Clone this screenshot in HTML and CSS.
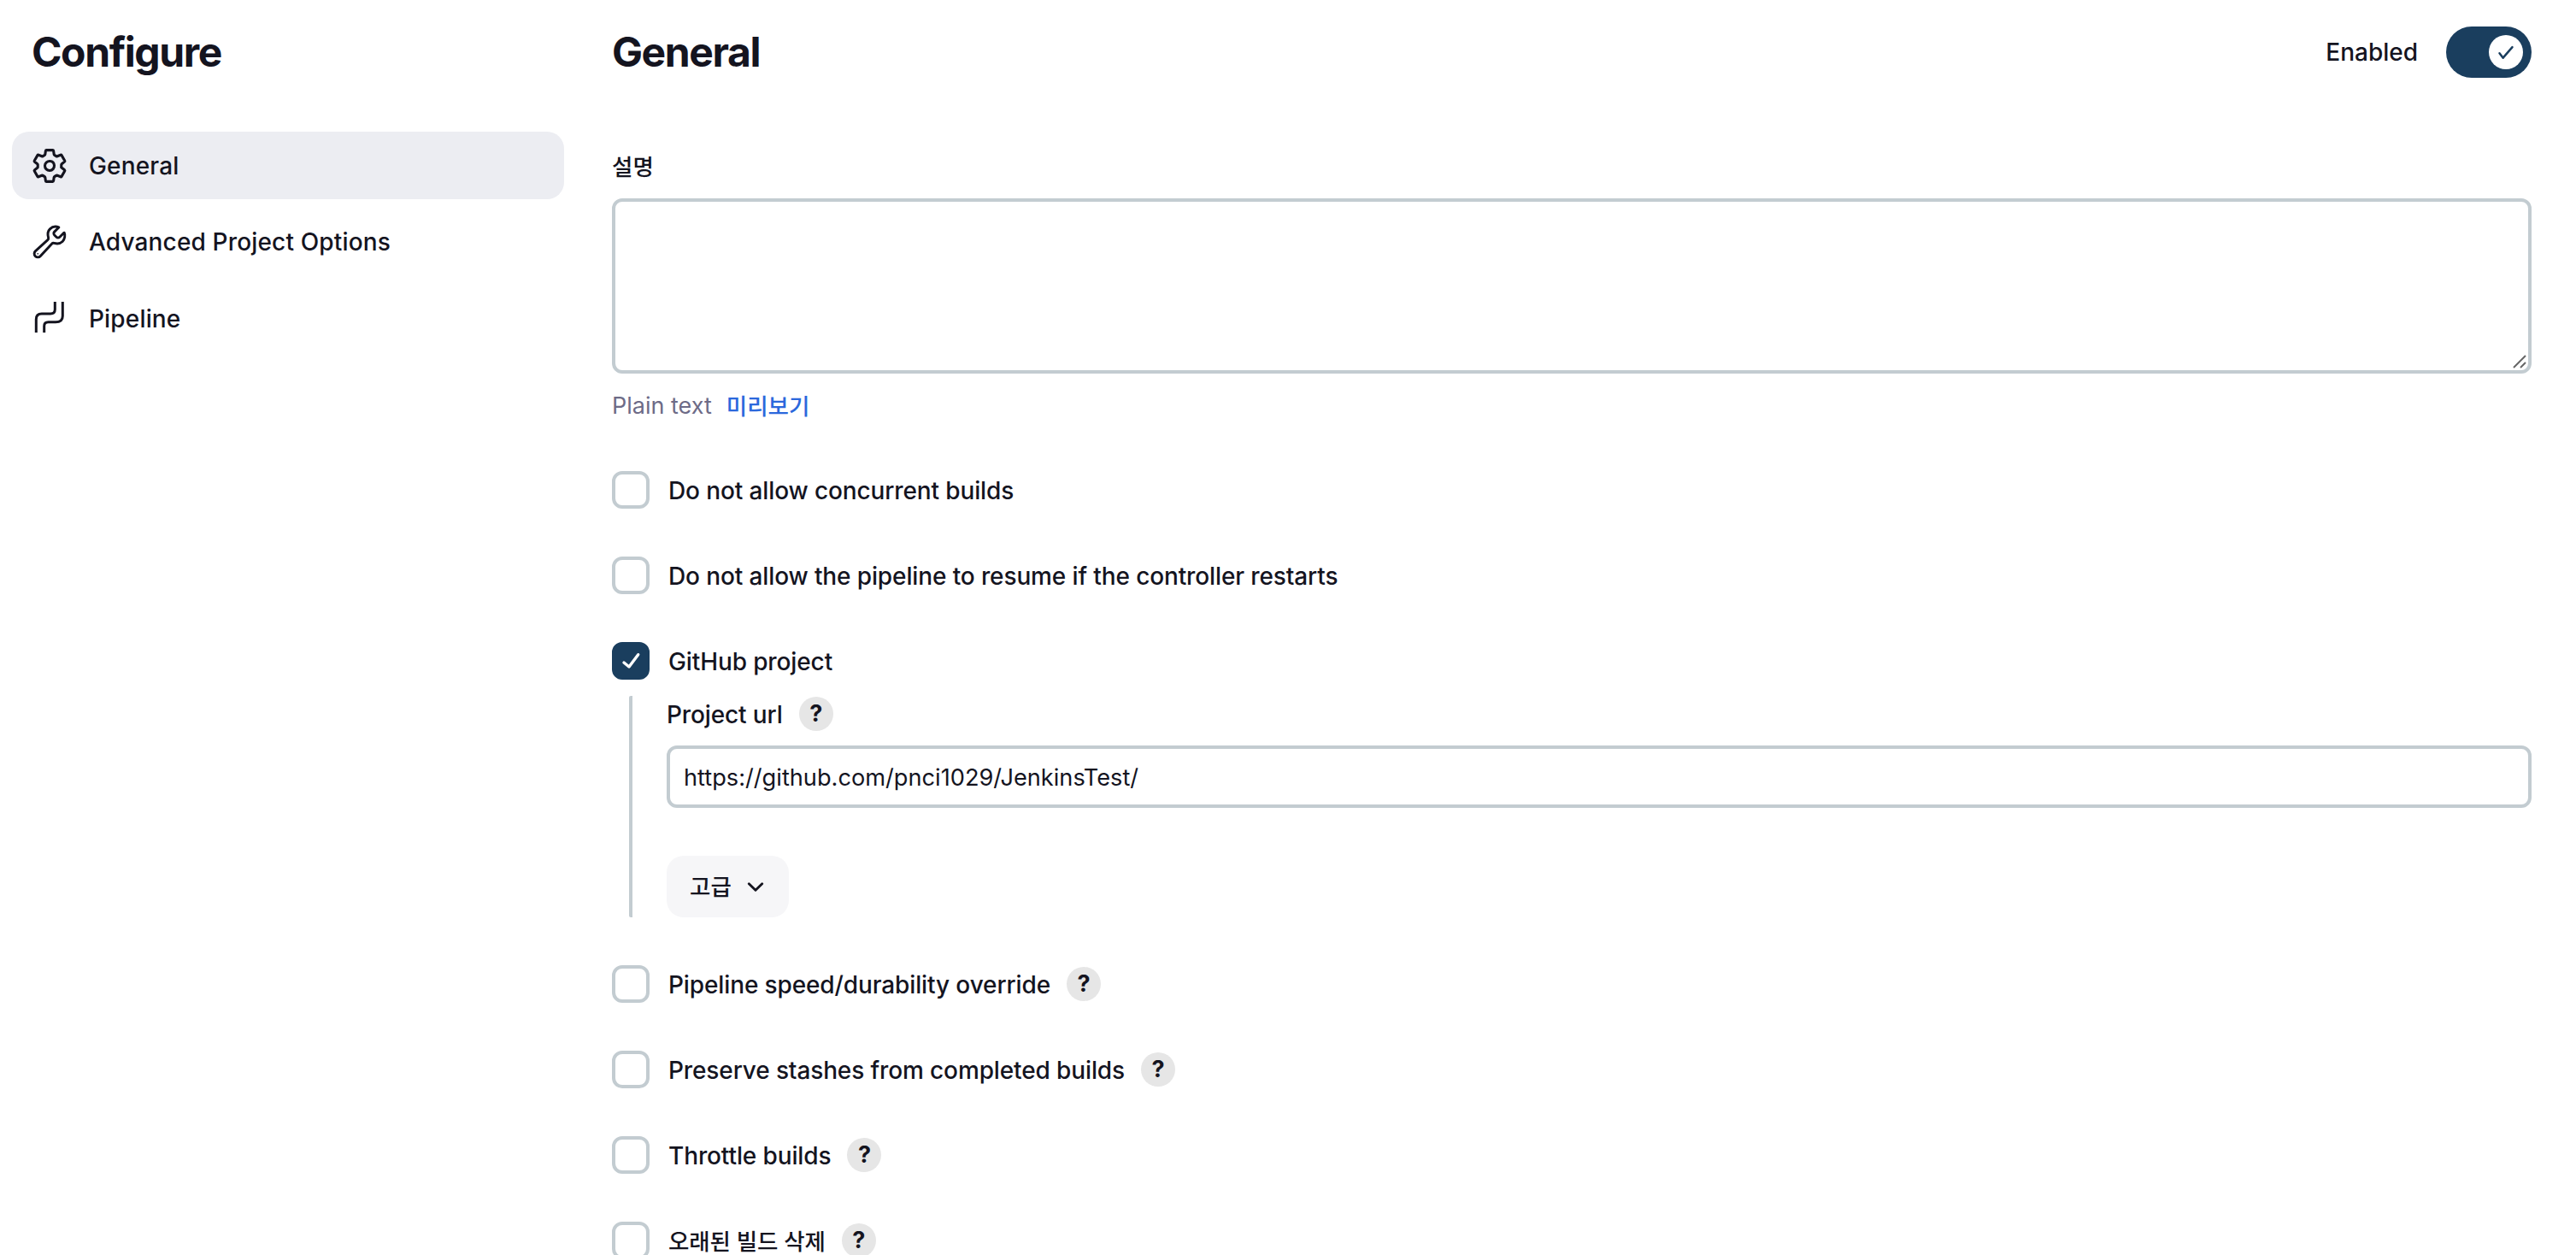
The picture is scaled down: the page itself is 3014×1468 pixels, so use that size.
FILE: index.html
```html
<!DOCTYPE html>
<html lang="ko">
<head>
<meta charset="utf-8">
<title>Configure</title>
<link rel="stylesheet" href="styles.css">
</head>
<body>
<div class="page">
  <aside class="sidebar">
    <h1 class="title side-title">Configure</h1>
    <nav class="nav">
      <a class="nav-item active">
        <svg class="nav-icon big" viewBox="0 0 512 512"><path d="M262.29 192.31a64 64 0 1057.4 57.4 64.13 64.13 0 00-57.4-57.4zM416.39 256a154.34 154.34 0 01-1.53 20.79l45.21 35.46a10.81 10.81 0 012.45 13.75l-42.77 74a10.81 10.81 0 01-13.14 4.59l-44.9-18.08a16.11 16.11 0 00-15.17 1.75A164.48 164.48 0 01325 400.8a15.94 15.94 0 00-8.82 12.14l-6.73 47.89a11.08 11.08 0 01-10.68 9.17h-85.54a11.11 11.11 0 01-10.69-8.87l-6.72-47.82a16.07 16.07 0 00-9-12.22 155.3 155.3 0 01-21.46-12.57 16 16 0 00-15.11-1.71l-44.89 18.07a10.81 10.81 0 01-13.14-4.58l-42.77-74a10.8 10.8 0 012.45-13.75l38.21-30a16.05 16.05 0 006-14.08c-.36-4.17-.58-8.33-.58-12.5s.21-8.27.58-12.35a16 16 0 00-6.07-13.94l-38.19-30A10.81 10.81 0 0149.48 186l42.77-74a10.81 10.81 0 0113.14-4.59l44.9 18.08a16.11 16.11 0 0015.17-1.75A164.48 164.48 0 01187 111.2a15.94 15.94 0 008.82-12.14l6.73-47.89A11.08 11.08 0 01213.23 42h85.54a11.11 11.11 0 0110.69 8.87l6.72 47.82a16.07 16.07 0 009 12.22 155.3 155.3 0 0121.46 12.57 16 16 0 0015.11 1.71l44.89-18.07a10.81 10.81 0 0113.14 4.58l42.77 74a10.8 10.8 0 01-2.45 13.75l-38.21 30a16.05 16.05 0 00-6.05 14.08c.33 4.14.55 8.3.55 12.47z" fill="none" stroke="currentColor" stroke-linecap="round" stroke-linejoin="round" stroke-width="36"/></svg>
        <span>General</span>
      </a>
      <a class="nav-item">
        <svg class="nav-icon big" viewBox="0 0 512 512"><path d="M393.87 190a32.1 32.1 0 01-45.25 0l-26.57-26.57a32.09 32.09 0 010-45.26L382.19 58a1 1 0 00-.3-1.64c-38.82-16.64-89.15-8.16-121.11 23.57-30.58 30.35-32.32 76-21.12 115.84a31.93 31.93 0 01-9.06 32.08L64 380a48.17 48.17 0 1068 68l153.86-167a31.93 31.93 0 0131.6-9.13c39.54 10.59 84.54 8.6 114.72-21.19 32.49-32 39.5-88.56 23.75-120.93a1 1 0 00-1.6-.26z" fill="none" stroke="currentColor" stroke-linecap="round" stroke-miterlimit="10" stroke-width="34"/><circle cx="96" cy="416" r="10" fill="currentColor"/></svg>
        <span>Advanced Project Options</span>
      </a>
      <a class="nav-item">
        <svg class="nav-icon" viewBox="0 0 40 40" fill="none" stroke="currentColor" stroke-width="3"><path d="M4.3 36V20.5q0-6.5 6.5-6.5H21q5.3 0 5.3-5V0"/><path d="M13.7 36v-7.5q0-4.8 4.8-4.8H27q8.3 0 8.3-7V0"/></svg>
        <span>Pipeline</span>
      </a>
    </nav>
  </aside>
  <main class="main">
    <header class="main-head">
      <h1 class="title">General</h1>
      <div class="enable">
        <span>Enabled</span>
        <span class="toggle"><span class="knob"><svg viewBox="0 0 24 24" class="knob-check"><path d="M3 13.5l5 6.5L21 5" fill="none" stroke="currentColor" stroke-width="3" stroke-linecap="round" stroke-linejoin="round"/></svg></span></span>
      </div>
    </header>
    <div class="desc-label ko">설명</div>
    <div class="textarea-wrap">
      <textarea class="textarea"></textarea>
      <svg class="grip" viewBox="0 0 16 16"><path d="M1 15L15 1M9 15l6-6" fill="none" stroke="#666" stroke-width="2"/></svg>
    </div>
    <div class="preview"><span class="plain">Plain text</span><a class="link ko">미리보기</a></div>

    <div class="options">
      <div class="opt"><span class="box"></span><span class="txt">Do not allow concurrent builds</span></div>
      <div class="opt"><span class="box"></span><span class="txt">Do not allow the pipeline to resume if the controller restarts</span></div>
      <div class="opt-group">
        <div class="opt"><span class="box checked"><svg viewBox="0 0 28 28" class="box-check"><path d="M6 16l6 5L22.7 6.7" fill="none" stroke="currentColor" stroke-width="3.4" stroke-linecap="round" stroke-linejoin="round"/></svg></span><span class="txt">GitHub project</span></div>
        <div class="nested">
          <div class="field-label"><span class="txt">Project url</span><span class="help">?</span></div>
          <input class="input" type="text" value="https://github.com/pnci1029/JenkinsTest/">
          <button class="adv" type="button"><span class="ko">고급</span><svg class="chev" viewBox="0 0 18 10"><path d="M2 1.5l7 7 7-7" fill="none" stroke="currentColor" stroke-width="2.6" stroke-linecap="round" stroke-linejoin="round"/></svg></button>
        </div>
      </div>
      <div class="opt"><span class="box"></span><span class="txt">Pipeline speed/durability override</span><span class="help">?</span></div>
      <div class="opt"><span class="box"></span><span class="txt">Preserve stashes from completed builds</span><span class="help">?</span></div>
      <div class="opt"><span class="box"></span><span class="txt">Throttle builds</span><span class="help">?</span></div>
      <div class="opt"><span class="box"></span><span class="txt ko">오래된 빌드 삭제</span><span class="help">?</span></div>
    </div>
  </main>
</div>
</body>
</html>
```
FILE: styles.css
```css
* { box-sizing: border-box; }
html, body { margin: 0; height: 100%; overflow: hidden; background: #fff; }
body {
  font-family: Inter, "Noto Sans CJK KR", sans-serif;
  font-size: 28px;
  font-weight: 450;
  line-height: 40px;
  color: #14141f;
}
.ko { font-size: 26.5px; }
.txt { padding-top: 2px; letter-spacing: -0.12px; }
.page { display: grid; grid-template-columns: 646px 1fr; column-gap: 56px; height: 1468px; padding: 0 52px 0 14px; }
.title { margin: 0; font-size: 48px; line-height: 60px; font-weight: 700; letter-spacing: -1.4px; }
.side-title { padding: 31px 0 0 23px; }
.nav { display: flex; flex-direction: column; gap: 10.5px; margin-top: 63px; }
.nav-item { display: flex; align-items: center; gap: 26px; height: 79px; padding-left: 24px; border-radius: 20px; letter-spacing: 0.16px; }
.nav-item.active { background: #ecedf2; }
.nav-icon { width: 40px; height: 40px; flex: none; }
.nav-icon.big { width: 44px; height: 44px; margin: 0 -2px; }
.main { min-width: 0; }
.main-head { display: flex; justify-content: space-between; align-items: center; padding-top: 31px; height: 91px; }
.enable { display: flex; align-items: center; gap: 33px; }
.toggle { display: flex; justify-content: flex-end; align-items: center; width: 100px; height: 60px; padding-right: 10px; border-radius: 30px; background: #1a3e5e; }
.knob { display: flex; align-items: center; justify-content: center; width: 40px; height: 40px; border-radius: 50%; background: #fff; color: #1a3e5e; }
.knob-check { width: 20px; height: 20px; }
.desc-label { margin-top: 83px; padding-top: 1px; height: 40px; }
.textarea-wrap { position: relative; margin-top: 18px; height: 205px; }
.textarea { display: block; width: 100%; height: 100%; border: 4px solid #c3ccd1; border-radius: 12px; background: #fff; resize: none; outline: none; }
.grip { position: absolute; right: 6px; bottom: 6px; width: 16px; height: 16px; }
.preview { display: flex; gap: 17px; height: 40px; margin-top: 16px; padding-top: 2px; }
.plain { color: #6d6b87; font-size: 27px; font-weight: 400; }
.link { color: #2b68dc; }
.options { display: flex; flex-direction: column; gap: 56px; margin-top: 58px; }
.opt { display: flex; align-items: center; height: 44px; }
.box { display: flex; align-items: center; justify-content: center; flex: none; width: 44px; height: 44px; margin-right: 22px; border: 4px solid #c3ccd1; border-radius: 12px; background: #fff; }
.box.checked { border-color: #1a3e5e; background: #1a3e5e; color: #fff; }
.box-check { width: 28px; height: 28px; flex: none; }
.help { display: flex; align-items: center; justify-content: center; flex: none; width: 40px; height: 40px; margin-left: 19px; border-radius: 50%; background: #e6e6e6; font-size: 27px; font-weight: 650; }
.nested { display: flex; flex-direction: column; align-items: flex-start; margin: 19px 0 0 20px; padding: 1px 0 0 40px; border-left: 4px solid #c3ccd1; border-radius: 2px; }
.field-label { display: flex; align-items: center; height: 40px; }
.input { width: 100%; height: 73px; margin-top: 17px; padding: 2px 16px 0; border: 4px solid #c3ccd1; border-radius: 12px; font: inherit; font-size: 27.2px; font-weight: 400; color: inherit; background: #fff; outline: none; }
.adv { display: flex; align-items: center; gap: 18px; width: 143px; height: 72px; margin-top: 56px; padding: 0 0 0 27px; border: 0; border-radius: 20px; background: #f6f6f8; font: inherit; color: inherit; }
.chev { width: 20px; height: 11px; flex: none; }
```
